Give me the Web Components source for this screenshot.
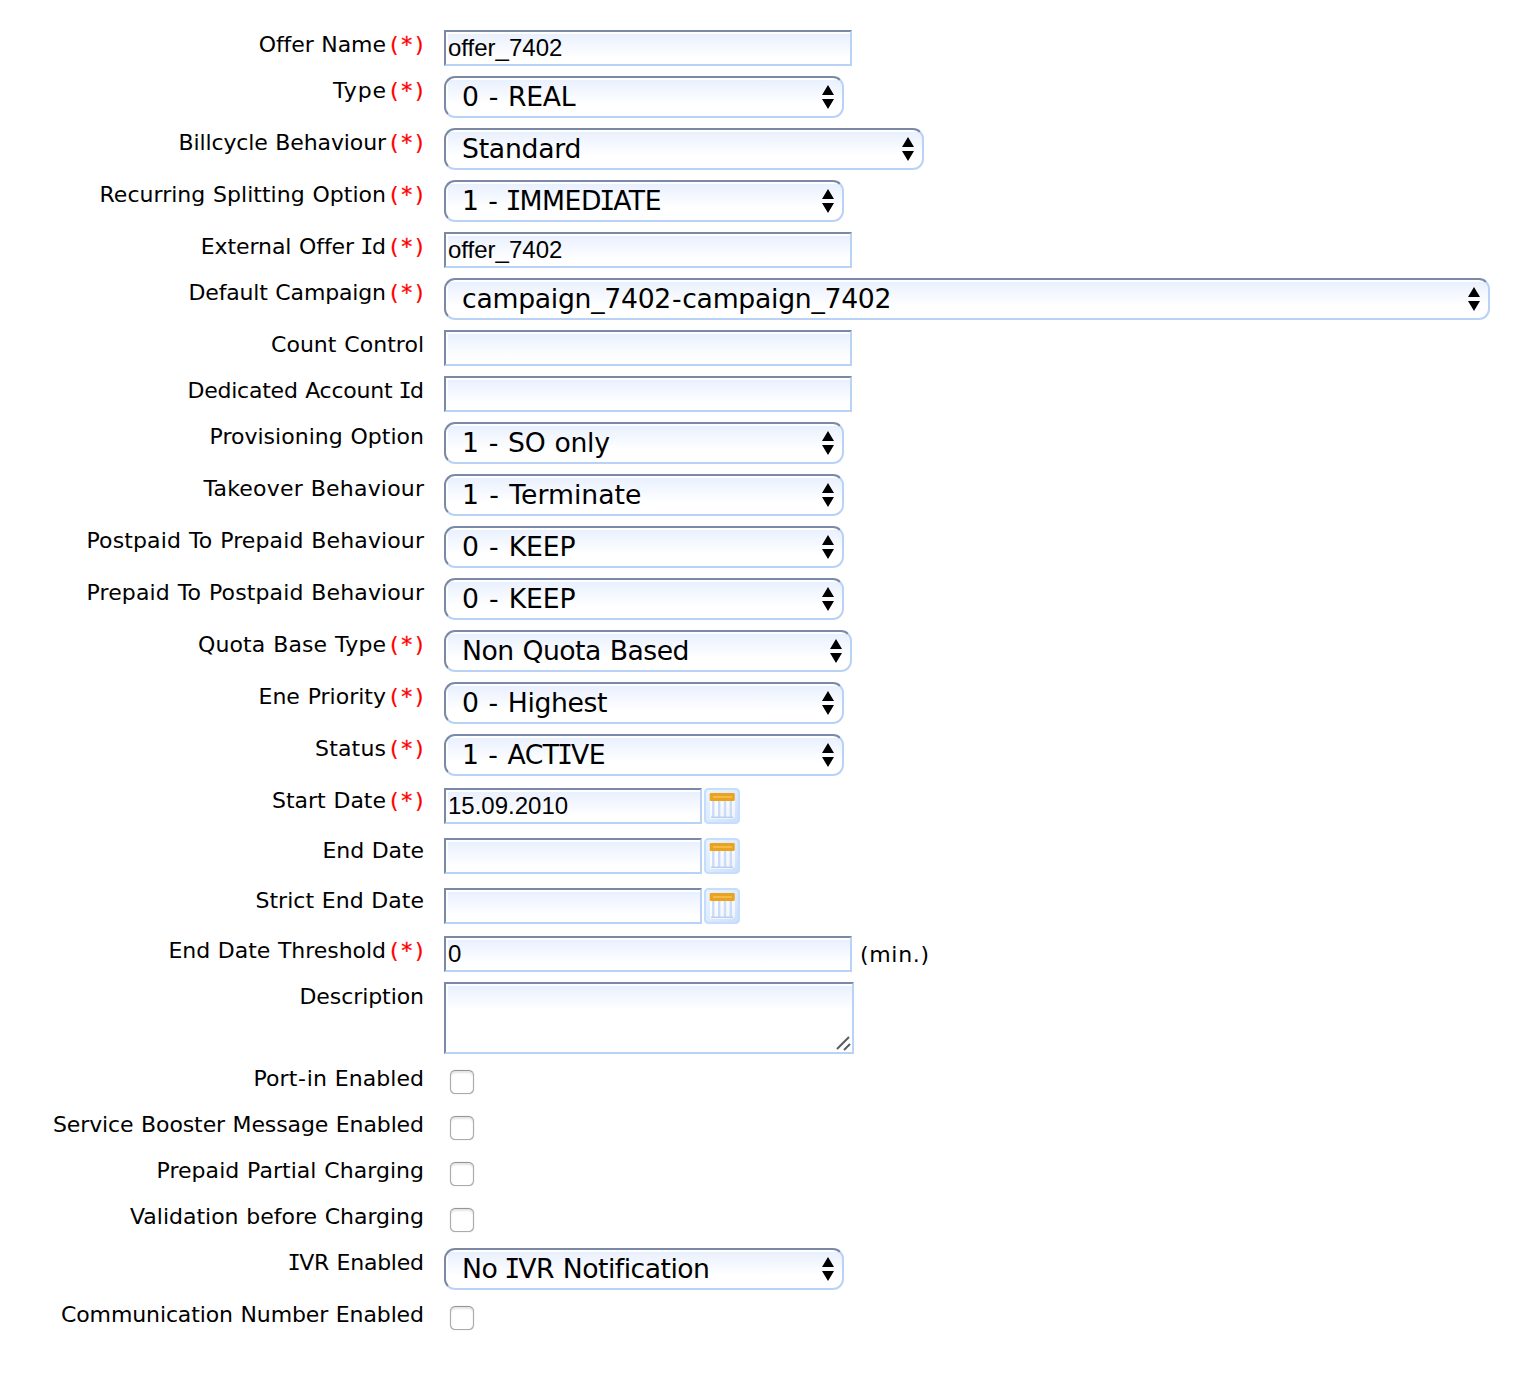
<!DOCTYPE html>
<html lang="en">
<head>
<meta charset="utf-8">
<title>Offer</title>
<style>
html, body { margin: 0; background: #fff; }
body { font-family: Verdana, "DejaVu Sans", sans-serif; color: #000; }
</style>
</head>
<body>
<offer-form></offer-form>
<script>
const shadow = (el, html) => { const r = el.attachShadow({ mode: 'open' }); r.innerHTML = html; return r; };

/* Text set to an exact advance width by adjusting its letter spacing; capital I is drawn with serifs. */
class FitText extends HTMLElement {
  connectedCallback() {
    const text = this.getAttribute('text');
    const r = shadow(this, `<style>
      :host{display:inline-block;white-space:pre}
      span{display:inline-block;word-spacing:.034em}
      i{font-style:normal;font-family:"DejaVu Sans Mono",monospace;margin:0 -.065em;line-height:0}
      u{text-decoration:none;margin:0 .035em}
      b{font-weight:normal;-webkit-text-stroke:.3px}
    </style><span>${text.replace(/I/g, '<i>I</i>').replace('*', '<b>*</b>').replace('-', '<u>-</u>')}</span>`);
    const s = r.querySelector('span');
    const w = parseFloat(this.getAttribute('w'));
    if (!w) return;
    const ls = (w - s.getBoundingClientRect().width) / (text.length - 1);
    s.style.letterSpacing = ls + 'px';
    s.style.marginRight = -ls + 'px';
  }
}

class FormRow extends HTMLElement {
  connectedCallback() {
    const req = this.hasAttribute('required');
    shadow(this, `<style>
      :host{display:flex;align-items:flex-start;height:var(--h,36px);margin-bottom:10px}
      .label{width:424px;display:flex;justify-content:flex-end;font-size:22px;line-height:28px;white-space:pre;padding-top:1px}
      .req{color:#f00;width:38px;box-sizing:border-box;display:flex;justify-content:flex-end;padding-right:.5px;-webkit-text-stroke:.2px}
      .control{display:flex;align-items:flex-start;margin-left:20px}
    </style><div class="label"><fit-text text="${this.getAttribute('label')}" w="${this.getAttribute('w')}"></fit-text>${req ? '<span class="req"><fit-text text="(*)" w="33.5"></fit-text></span>' : ''}</div><div class="control"><slot></slot></div>`);
  }
}

const skin = `box-sizing:border-box;border:2px solid;border-color:#7a8aa6 #b9d3f6 #b9d3f6 #7a8aa6;
  background:linear-gradient(#e9f0fe,#fff 24px) 2px 2px/calc(100% - 2px) calc(100% - 2px) no-repeat #fff;`;

class TextField extends HTMLElement {
  connectedCallback() {
    shadow(this, `<style>
      :host{display:block;width:${this.getAttribute('width') || 408}px;height:36px;${skin}
        font:24px/30px "Liberation Sans",Arial,sans-serif;padding:1px 0 0 2px;white-space:pre}
    </style><slot></slot>`);
  }
}

class SelectField extends HTMLElement {
  connectedCallback() {
    shadow(this, `<style>
      :host{display:flex;justify-content:space-between;width:${this.getAttribute('width') || 400}px;height:42px;${skin}
        border-radius:11px;font-size:26.67px;line-height:38px;padding:0 8px 0 16px;white-space:pre}
      svg{display:block;margin-top:7px}
    </style><fit-text text="${this.getAttribute('value')}" w="${this.getAttribute('w')}"></fit-text>
    <svg width="12" height="24" viewBox="0 0 12 24"><path d="M6 0 12 10H0ZM0 14H12L6 24Z"/></svg>`);
  }
}

class TextArea extends HTMLElement {
  connectedCallback() {
    shadow(this, `<style>
      :host{display:flex;justify-content:flex-end;align-items:flex-end;width:410px;height:72px;${skin}}
      svg{display:block}
    </style><svg width="18" height="18" viewBox="0 0 18 18"><path d="M3 15 15 3M10 16 16 10" fill="none" stroke="#5c5c5c" stroke-width="2"/></svg>`);
  }
}

class DateField extends HTMLElement {
  connectedCallback() {
    shadow(this, `<style>
      :host{display:flex;gap:2px;padding-top:2px}
      svg{display:block}
    </style><text-field width="258"><slot></slot></text-field>
    <svg width="36" height="36" viewBox="0 0 36 36">
      <defs>
        <linearGradient id="b" x1="0" y1="0" x2="1" y2="1"><stop offset="0" stop-color="#eef6ff"/><stop offset="1" stop-color="#cbdffb"/></linearGradient>
        <linearGradient id="p" x1="0" y1="0" x2="1" y2="1"><stop offset="0" stop-color="#fff"/><stop offset="1" stop-color="#edf3fc"/></linearGradient>
      </defs>
      <rect x="1" y="1" width="34" height="34" rx="3.5" fill="url(#b)" stroke="#c6defd" stroke-width="2.2"/>
      <path d="M6 12H31V29L28 31H6Z" fill="url(#p)"/>
      <path d="M9.3 13V29M15.2 13V29M21 13V29M26.8 13V29" stroke="#cbdcf7" stroke-width="2.4"/>
      <path d="M7 29.3H29" stroke="#bccff1" stroke-width="1.5"/>
      <rect x="5.7" y="5" width="25" height="8" rx="1.2" fill="#eba21c"/>
      <path d="M9 9H28" stroke="#f5bd52" stroke-width="1.8"/>
    </svg>`);
  }
}

class CheckBox extends HTMLElement {
  connectedCallback() {
    shadow(this, `<style>
      :host{display:block;box-sizing:border-box;width:24px;height:24px;margin:6px 0 0 6px;
        border:1.5px solid #ababab;border-top-color:#969696;border-radius:5.5px;
        background:#fff;box-shadow:inset 0 2px 2px #e4e4e4,0 0 1px #aaa}
    </style>`);
  }
}

class OfferForm extends HTMLElement {
  connectedCallback() {
    const text = v => `<text-field>${v}</text-field>`;
    const sel = (v, w, width = 400) => `<select-field value="${v}" w="${w}" width="${width}"></select-field>`;
    const date = v => `<date-field>${v}</date-field>`;
    const check = '<check-box></check-box>';
    /* label, label width, required, row height, control */
    const rows = [
      ['Offer Name', 127, 1, 36, text('offer_7402')],
      ['Type', 53, 1, 42, sel('0 - REAL', 113.5)],
      ['Billcycle Behaviour', 207.5, 1, 42, sel('Standard', 119.5, 480)],
      ['Recurring Splitting Option', 286.5, 1, 42, sel('1 - IMMEDIATE', 199.5)],
      ['External Offer Id', 185, 1, 36, text('offer_7402')],
      ['Default Campaign', 197.5, 1, 42, sel('campaign_7402-campaign_7402', 429.5, 1046)],
      ['Count Control', 153, 0, 36, text('')],
      ['Dedicated Account Id', 236.5, 0, 36, text('')],
      ['Provisioning Option', 214.5, 0, 42, sel('1 - SO only', 148)],
      ['Takeover Behaviour', 220.5, 0, 42, sel('1 - Terminate', 179.5)],
      ['Postpaid To Prepaid Behaviour', 337.5, 0, 42, sel('0 - KEEP', 113.5)],
      ['Prepaid To Postpaid Behaviour', 337.5, 0, 42, sel('0 - KEEP', 113.5)],
      ['Quota Base Type', 188, 1, 42, sel('Non Quota Based', 227.5, 408)],
      ['Ene Priority', 127.5, 1, 42, sel('0 - Highest', 145.5)],
      ['Status', 71, 1, 42, sel('1 - ACTIVE', 143.5)],
      ['Start Date', 114, 1, 40, date('15.09.2010')],
      ['End Date', 101.5, 0, 40, date('')],
      ['Strict End Date', 168.5, 0, 40, date('')],
      ['End Date Threshold', 217.5, 1, 36, text('0') + '<fit-text class="unit" text="(min.)" w="69"></fit-text>'],
      ['Description', 124.5, 0, 72, '<text-area></text-area>'],
      ['Port-in Enabled', 170.5, 0, 36, check],
      ['Service Booster Message Enabled', 371, 0, 36, check],
      ['Prepaid Partial Charging', 267.5, 0, 36, check],
      ['Validation before Charging', 294, 0, 36, check],
      ['IVR Enabled', 135, 0, 42, sel('No IVR Notification', 248)],
      ['Communication Number Enabled', 363, 0, 36, check],
    ];
    shadow(this, `<style>
      :host{display:block;width:1536px;height:1382px;box-sizing:border-box;padding-top:30px}
      .unit{font-size:22px;line-height:28px;margin:5px 0 0 8px}
    </style>` + rows.map(([l, w, req, h, c]) =>
      `<form-row label="${l}" w="${w}" ${req ? 'required' : ''} style="--h:${h}px">${c}</form-row>`).join(''));
  }
}

customElements.define('fit-text', FitText);
customElements.define('form-row', FormRow);
customElements.define('text-field', TextField);
customElements.define('select-field', SelectField);
customElements.define('text-area', TextArea);
customElements.define('date-field', DateField);
customElements.define('check-box', CheckBox);
customElements.define('offer-form', OfferForm);
</script>
</body>
</html>
